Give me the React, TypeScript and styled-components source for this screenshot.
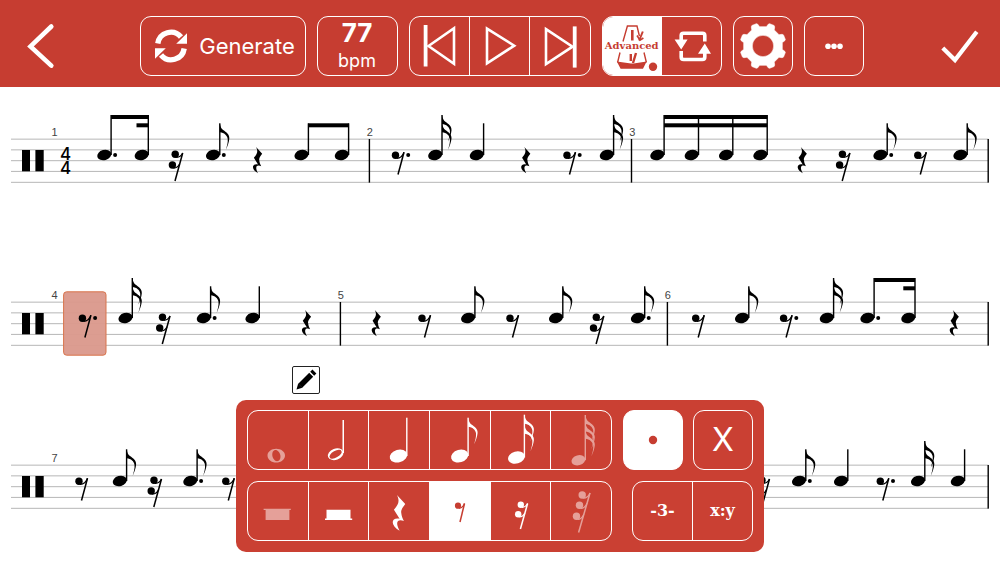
import React from "react";
import styled, { createGlobalStyle, css } from "styled-components";

const RED = "#c63d31";
const PANEL_RED = "#ca4033";
const SANS = `Inter, Roboto, "Liberation Sans", sans-serif`;
const SLAB = `"DejaVu Serif", "Liberation Serif", serif`;

const GlobalStyle = createGlobalStyle`
  *, *::before, *::after { box-sizing: border-box; }
  body { margin: 0; background: #fff; font-family: ${SANS}; }
  button { font: inherit; color: inherit; background: none; border: 0; padding: 0; cursor: pointer; }
`;

const Screen = styled.div`
  position: relative;
  display: flex;
  flex-direction: column;
  height: 100vh;
  overflow: hidden;
`;

/* ---------- top bar ---------- */

const TopBar = styled.header`
  flex: none;
  display: grid;
  grid-template-columns: 1fr auto 1fr;
  align-items: center;
  padding: 16px 16px 11px 16px;
  background: ${RED};
  color: #fff;
`;

const NavButton = styled.button<{ $end?: boolean }>`
  display: flex;
  width: 48px;
  height: 60px;
  align-items: center;
  justify-content: center;
  justify-self: ${(p) => (p.$end ? "end" : "start")};
`;

const Tools = styled.div`
  display: flex;
  gap: 11px;
  margin-left: 3px;
`;

const outlined = css`
  border: 1px solid #fff;
  border-radius: 11px;
`;

const ToolButton = styled.button<{ $width: number; $on?: boolean }>`
  ${outlined}
  display: flex;
  align-items: center;
  justify-content: center;
  width: ${(p) => p.$width}px;
  height: 60px;
  background: ${(p) => (p.$on ? "#fff" : "transparent")};
  color: ${(p) => (p.$on ? RED : "#fff")};
`;

const GenerateButton = styled(ToolButton)`
  gap: 12px;
  padding-left: 5px;
  font-size: 22px;
  line-height: 28px;
`;

const TempoButton = styled(ToolButton)`
  flex-direction: column;
  font-size: 18px;
  line-height: 27px;
  strong {
    font-size: 26px;
    line-height: 28px;
    font-weight: 700;
  }
`;

const Group = styled.div<{ $width: number }>`
  ${outlined}
  display: flex;
  width: ${(p) => p.$width}px;
  height: 60px;
  overflow: hidden;
`;

const Cell = styled.button<{ $on?: boolean; $dim?: boolean }>`
  position: relative;
  flex: 1 1 0;
  display: flex;
  align-items: center;
  justify-content: center;
  background: ${(p) => (p.$on ? "#fff" : "transparent")};
  color: ${(p) => (p.$on ? RED : p.$dim ? "rgba(255, 255, 255, 0.5)" : "#fff")};
  & + & {
    border-left: 1px solid #fff;
  }
`;

const Glyph = styled.svg`
  flex: none;
  display: block;
  overflow: visible;
`;

const AdvancedLabel = styled.span`
  position: absolute;
  inset: 0;
  display: flex;
  align-items: center;
  justify-content: center;
  font: 700 10px/12px ${SLAB};
`;

const SlabText = styled.span`
  font: 700 16px/20px ${SLAB};
`;

const CloseText = styled.span`
  font-size: 32px;
  line-height: 40px;
`;

/* ---------- score ---------- */

const Score = styled.main`
  display: flex;
  flex-direction: column;
  gap: 23px;
`;

const Staff = styled.svg`
  display: block;
  width: 100%;
  height: auto;
  flex: none;
  overflow: visible;
`;

/* ---------- editor ---------- */

const EditorDock = styled.div`
  position: absolute;
  left: 0;
  right: 0;
  bottom: 11px;
  display: flex;
  justify-content: center;
  pointer-events: none;
`;

const Editor = styled.section`
  display: flex;
  flex-direction: column;
  align-items: flex-start;
  gap: 6px;
  pointer-events: auto;
`;

const PencilButton = styled.button`
  display: flex;
  align-items: center;
  justify-content: center;
  width: 28px;
  height: 28px;
  margin-left: 56px;
  border: 1px solid #222;
  border-radius: 2px;
  background: #fff;
  color: #000;
`;

const Palette = styled.div`
  display: flex;
  flex-direction: column;
  gap: 11px;
  width: 528px;
  padding: 10px 11px 11px;
  border-radius: 10px;
  background: ${PANEL_RED};
  color: #fff;
`;

const PaletteRow = styled.div`
  display: flex;
  justify-content: space-between;
`;

/* ---------- drawings ---------- */

type IconProps = { children: React.ReactNode; size?: number };

/* Icons are drawn around a centre at 0,0. */
function Icon({ children, size = 48 }: IconProps) {
  return (
    <Glyph width={size} height={size} viewBox={`${-size / 2} ${-size / 2} ${size} ${size}`} aria-hidden="true">
      {children}
    </Glyph>
  );
}

const FLAG =
  "M0,0 C0.8,4 1.6,5.4 3.4,6.8 C6.4,9 9.8,11 9.5,15.4 C9.2,19.2 7.6,23 6,26.8 C7.2,22.4 8.3,18.8 7.9,15.6 C7.4,12.2 4.5,9.4 0,9Z";
const QUARTER_REST =
  "M-5,-54 L20,-27 C8,-12 7,-6 8,0 C9,10 12,17 16,24 C-2,17 -12,26 3,53 C-25,38 -24,12 3,17 L-14,-10 C0,-26 4,-36 -5,-54Z";

type NoteProps = { x: number; y: number; stem?: number; flags?: number; scale?: number; top: number; flagGap?: number };

function FilledNote({ x, y, stem = 6.8, flags = 0, scale = 1, top, flagGap = 8.2 }: NoteProps) {
  return (
    <g fill="currentColor">
      <ellipse cx={x} cy={y} rx={7.2 * scale} ry={5.1 * scale} transform={`rotate(-16 ${x} ${y})`} />
      <rect x={x + stem - 0.7} y={top} width={1.4} height={y - top} />
      {Array.from({ length: flags }, (_, i) => (
        <path key={i} d={FLAG} transform={`translate(${x + stem} ${top + i * flagGap})`} />
      ))}
    </g>
  );
}

function QuarterRest({ x, y, scale }: { x: number; y: number; scale: number }) {
  return <path d={QUARTER_REST} fill="currentColor" transform={`translate(${x} ${y}) scale(${scale})`} />;
}

type HookRestProps = { blobs: [number, number][]; tip: [number, number]; foot: [number, number]; r: number };

function HookRest({ blobs, tip, foot, r }: HookRestProps) {
  return (
    <g fill="none" stroke="currentColor" strokeWidth={1.2} strokeLinejoin="round">
      <path d={`M${tip} L${foot}`} strokeWidth={1.5} />
      {blobs.map(([bx, by], i) => {
        const t = (by - blobs[0][1]) / (foot[1] - tip[1]);
        const ex = tip[0] + (foot[0] - tip[0]) * t;
        const ey = tip[1] + (foot[1] - tip[1]) * t;
        return (
          <g key={i}>
            <circle cx={bx} cy={by} r={r} fill="currentColor" stroke="none" />
            <path d={`M${bx + 1},${by + r - 0.6} Q${ex - 2.2},${by + r - 0.4} ${ex},${ey}`} />
          </g>
        );
      })}
    </g>
  );
}

type Kind = "head" | "quarter" | "eighth" | "sixteenth" | "r4" | "r8" | "r16";
type Mark = { k: Kind; x: number; dot?: boolean };
type Beam = { stems: number[]; top: number; second?: [number, number] };
type SystemData = {
  marks: Mark[];
  beams: Beam[];
  bars: number[];
  numbers: [number, string][];
  time?: boolean;
  selection?: [number, number];
};

const HEAD_Y = 68;

function ScoreMark({ k, x, dot }: Mark) {
  const restDot = k === "r8" ? 12.7 : 10.8;
  return (
    <g>
      {k === "head" && (
        <ellipse cx={x} cy={HEAD_Y} rx={7.2} ry={5.1} transform={`rotate(-16 ${x} ${HEAD_Y})`} />
      )}
      {k === "quarter" && <FilledNote x={x} y={HEAD_Y} top={36.3} />}
      {k === "eighth" && <FilledNote x={x} y={HEAD_Y} top={36.3} flags={1} />}
      {k === "sixteenth" && <FilledNote x={x} y={HEAD_Y} top={28} flags={2} />}
      {k === "r4" && <QuarterRest x={x} y={73.3} scale={0.244} />}
      {k === "r8" && <HookRest blobs={[[x, 68.2]]} tip={[x + 8.5, 65.2]} foot={[x + 2.5, 87.5]} r={3.7} />}
      {k === "r16" && (
        <HookRest blobs={[[x, 67.2], [x - 2.8, 78]]} tip={[x + 7.5, 66]} foot={[x - 0.2, 94]} r={3.7} />
      )}
      {dot && <circle cx={x + restDot} cy={HEAD_Y} r={2} />}
    </g>
  );
}

function System({ data, label }: { data: SystemData; label: string }) {
  return (
    <Staff viewBox="0 0 1000 140" role="img" aria-label={label} color="#000">
      <g fill="#bdbdbd">
        {[51.6, 62.3, 73.1, 83.9, 94.8].map((y) => (
          <rect key={y} x={11} y={y} width={977.5} height={1.1} />
        ))}
      </g>
      {data.selection && (
        <rect
          x={data.selection[0]}
          y={41.8}
          width={data.selection[1]}
          height={63.4}
          rx={3}
          fill="#db998c"
          fillOpacity={0.96}
          stroke="#d9744c"
        />
      )}
      <rect x={22} y={63} width={8} height={21.3} />
      <rect x={35.4} y={63} width={8.3} height={21.3} />
      {data.time && (
        <g fontFamily="Inter, Liberation Sans, sans-serif" fontSize="17" fontWeight="500" textAnchor="middle">
          <text x="65.5" y="73">4</text>
          <text x="65.5" y="87">4</text>
        </g>
      )}
      <g fontFamily="Liberation Sans, Arial, sans-serif" fontSize="11" fill="#444" textAnchor="middle">
        {data.numbers.map(([x, n]) => (
          <text key={n} x={x} y={49}>{n}</text>
        ))}
      </g>
      {data.bars.map((x) => (
        <rect key={x} x={x - 0.7} y={52} width={1.4} height={43.6} />
      ))}
      {data.marks.map((m) => (
        <ScoreMark key={m.x} {...m} />
      ))}
      {data.beams.map((b) => {
        const first = b.stems[0];
        const last = b.stems[b.stems.length - 1];
        return (
          <g key={first}>
            {b.stems.map((s) => (
              <rect key={s} x={s - 0.7} y={b.top} width={1.4} height={HEAD_Y - b.top} />
            ))}
            <rect x={first} y={b.top} width={last - first} height={4} />
            {b.second && <rect x={b.second[0]} y={b.top + 8.3} width={b.second[1] - b.second[0]} height={4} />}
          </g>
        );
      })}
    </Staff>
  );
}

const systems: SystemData[] = [
  {
    time: true,
    numbers: [[54.5, "1"], [369.7, "2"], [632.2, "3"]],
    bars: [369.4, 631.5, 988.2],
    marks: [
      { k: "head", x: 104.3, dot: true }, { k: "head", x: 141.7 }, { k: "r16", x: 175.2 },
      { k: "eighth", x: 213, dot: true }, { k: "r4", x: 257.3 }, { k: "head", x: 301.5 }, { k: "head", x: 341.8 },
      { k: "r8", x: 395.5, dot: true }, { k: "sixteenth", x: 435.2 }, { k: "quarter", x: 476.8 },
      { k: "r4", x: 525.5 }, { k: "r8", x: 567, dot: true }, { k: "sixteenth", x: 606.8 },
      { k: "head", x: 657.3 }, { k: "head", x: 691.7 }, { k: "head", x: 726 }, { k: "head", x: 760.4 },
      { k: "r4", x: 802 }, { k: "r16", x: 842.4 }, { k: "eighth", x: 880.4, dot: true },
      { k: "r8", x: 917.8 }, { k: "eighth", x: 960.4 },
    ],
    beams: [
      { stems: [111.1, 148.3], top: 28, second: [136.5, 148.3] },
      { stems: [308.4, 348.6], top: 36.3 },
      { stems: [664.1, 698.5, 732.8, 767.2], top: 28, second: [664.1, 767.2] },
    ],
  },
  {
    selection: [63.6, 42.4],
    numbers: [[54.5, "4"], [340.7, "5"], [667.8, "6"]],
    bars: [340.4, 667.4, 988.2],
    marks: [
      { k: "r8", x: 82.4, dot: true }, { k: "sixteenth", x: 125.5 }, { k: "r16", x: 162.5 },
      { k: "eighth", x: 203.8, dot: true }, { k: "quarter", x: 252.5 }, { k: "r4", x: 306.2 },
      { k: "r4", x: 376 }, { k: "r8", x: 422 }, { k: "eighth", x: 468.1 }, { k: "r8", x: 510 },
      { k: "eighth", x: 556 }, { k: "r16", x: 596.3 }, { k: "eighth", x: 637.9, dot: true },
      { k: "r8", x: 695.7 }, { k: "eighth", x: 742 }, { k: "r8", x: 783.6, dot: true },
      { k: "sixteenth", x: 826.8 }, { k: "head", x: 867.4, dot: true }, { k: "head", x: 908.3 },
      { k: "r4", x: 954 },
    ],
    beams: [{ stems: [874.1, 915], top: 28, second: [903.3, 915] }],
  },
  {
    numbers: [[54.5, "7"]],
    bars: [988.2],
    marks: [
      { k: "r8", x: 79 }, { k: "eighth", x: 119.8 }, { k: "r16", x: 154 }, { k: "eighth", x: 190.3, dot: true },
      { k: "r8", x: 225.8 }, { k: "r16", x: 762 }, { k: "eighth", x: 799, dot: true },
      { k: "quarter", x: 841 }, { k: "r8", x: 880.3, dot: true }, { k: "sixteenth", x: 918 },
      { k: "quarter", x: 957.8 },
    ],
    beams: [],
  },
];

function gearPath() {
  const pts: string[] = [];
  const at = (deg: number, r: number) => {
    const a = (deg * Math.PI) / 180;
    pts.push(`${(r * Math.sin(a)).toFixed(2)},${(-r * Math.cos(a)).toFixed(2)}`);
  };
  for (let i = 0; i < 8; i++) {
    const c = 22.5 + i * 45;
    at(c - 12.5, 19.6);
    at(c - 9, 22.4);
    at(c - 6, 23.3);
    at(c + 6, 23.3);
    at(c + 9, 22.4);
    at(c + 12.5, 19.6);
  }
  return `M${pts.join("L")}ZM10.7,0A10.7,10.7 0 1 0 -10.7,0A10.7,10.7 0 1 0 10.7,0Z`;
}

const refreshHalf = (
  <>
    <path d="M-13.2,-2.5 A13.2,13.2 0 0 1 10,-9" fill="none" stroke="currentColor" strokeWidth="5.4" />
    <path d="M16,-12.8 V-2.2 H5.2 L8.6,-5.6 L12.4,-9.2Z" fill="currentColor" />
  </>
);

const noteValues = [
  {
    name: "Whole note",
    dim: true,
    icon: (
      <path
        fillRule="evenodd"
        fill="currentColor"
        d="M-10.5,15.5 C-10.5,11.5 -6.5,8.7 -1.8,8.7 C3,8.7 7,11.5 7,15.5 C7,19.5 3,22.6 -1.8,22.6 C-6.5,22.6 -10.5,19.5 -10.5,15.5Z M-5.6,13 C-6.4,17 -3.8,21 -0.9,21.2 C1.5,21.2 2.8,18.8 2.4,15.6 C2,12.4 -0.2,9.9 -2.6,9.9 C-4.2,9.9 -5.2,11.2 -5.6,13Z"
      />
    ),
  },
  {
    name: "Half note",
    icon: (
      <g fill="currentColor">
        <path
          fillRule="evenodd"
          d="M4.12,11.46 A8,5.6 -20 1 0 -10.92,16.94 A8,5.6 -20 1 0 4.12,11.46Z M2.37,10.9 A6.7,2.9 -30 1 0 -9.17,17.5 A6.7,2.9 -30 1 0 2.37,10.9Z"
        />
        <rect x="3.5" y="-20" width="1.5" height="33" />
      </g>
    ),
  },
  { name: "Quarter note", icon: <FilledNote x={-0.5} y={16} stem={8.3} scale={1.24} top={-22.3} /> },
  { name: "Eighth note", icon: <FilledNote x={-0.3} y={16} stem={8.4} scale={1.22} top={-22.3} flags={1} /> },
  { name: "Sixteenth note", icon: <FilledNote x={-4.6} y={17.5} stem={8} scale={1.18} top={-25.3} flags={2} flagGap={10} /> },
  {
    name: "Thirty-second note",
    dim: true,
    icon: (
      <g opacity="0.5" color="#fff">
        <FilledNote x={-2.6} y={20.2} stem={6.9} scale={0.98} top={-25} flags={3} flagGap={7.4} />
      </g>
    ),
  },
];

const restValues = [
  {
    name: "Whole rest",
    dim: true,
    icon: <path d="M-14.4,-2.3 H12.8 V-1 H11.4 V9 H-12.4 V-1 H-14.4Z" fill="currentColor" />,
  },
  {
    name: "Half rest",
    icon: <path d="M-12.5,-1.3 H11.5 V7.6 H13.2 V9 H-14 V7.6 H-12.5Z" fill="currentColor" />,
  },
  { name: "Quarter rest", icon: <QuarterRest x={-0.4} y={2} scale={0.333} /> },
  {
    name: "Eighth rest",
    on: true,
    icon: <HookRest blobs={[[-2, -5.3]]} tip={[4.5, -7.5]} foot={[0, 11]} r={3.1} />,
  },
  {
    name: "Sixteenth rest",
    icon: <HookRest blobs={[[-0.2, -6.3], [-2.8, 3.3]]} tip={[6.6, -7.5]} foot={[-0.6, 18]} r={3.2} />,
  },
  {
    name: "Thirty-second rest",
    dim: true,
    icon: (
      <g opacity="0.5" color="#fff">
        <HookRest blobs={[[1.2, -16], [-1.5, -5.8], [-4.5, 5.3]]} tip={[9, -18]} foot={[-2.4, 21.5]} r={3.7} />
      </g>
    ),
  },
];

export default function App() {
  return (
    <Screen>
      <GlobalStyle />
      <TopBar>
        <NavButton aria-label="Back">
          <Icon>
            <path d="M11.3,-19.5 L-9.5,0.4 L11.3,19.6" fill="none" stroke="currentColor" strokeWidth="4.6" strokeLinecap="round" />
          </Icon>
        </NavButton>
        <Tools>
          <GenerateButton $width={166}>
            <Icon size={32}>
              {refreshHalf}
              <g transform="rotate(180)">{refreshHalf}</g>
            </Icon>
            <span>Generate</span>
          </GenerateButton>
          <TempoButton $width={81}>
            <strong>77</strong>
            <span>bpm</span>
          </TempoButton>
          <Group $width={182}>
            <Cell aria-label="Previous">
              <Icon>
                <path d="M-10.5,0 L15,-17.8 V17.8Z" fill="none" stroke="currentColor" strokeWidth="2.6" />
                <rect x="-15.3" y="-21" width="3.8" height="41.5" fill="currentColor" />
              </Icon>
            </Cell>
            <Cell aria-label="Play">
              <Icon>
                <path d="M-12,-17.3 L15.2,-0.3 L-12,17.3Z" fill="none" stroke="currentColor" strokeWidth="2.6" />
              </Icon>
            </Cell>
            <Cell aria-label="Next">
              <Icon>
                <path d="M-14,-16.8 L12.5,0.7 L-14,18Z" fill="none" stroke="currentColor" strokeWidth="2.6" />
                <rect x="12.8" y="-19.6" width="3.8" height="41.2" fill="currentColor" />
              </Icon>
            </Cell>
          </Group>
          <Group $width={120}>
            <Cell $on>
              <Icon>
                <g fill="none" stroke="currentColor" strokeWidth="1.4">
                  <path d="M-9,-4.5 L-4.6,-20 H5 L7.4,-10" />
                  <path d="M10.8,-14.5 L7.2,-5.5" strokeWidth="2" />
                  <path d="M5,-10.5 L8,-5.8 L11.4,-8" strokeWidth="1.6" />
                  <path d="M0.3,-16 V-5.5" strokeWidth="2.6" />
                  <path d="M-12,6.5 L-14.4,16.5 M12,6.5 L14.4,16.5" />
                  <path d="M-1.2,8 V15 M4,7 L1,17" strokeWidth="2.4" />
                </g>
                <path d="M-15.2,15.6 L-1,17.4 H1.6 L14.6,15.6 L11,22.8 H-11.4Z" fill="currentColor" />
                <circle cx="21" cy="20.8" r="4.2" fill="currentColor" />
              </Icon>
              <AdvancedLabel>Advanced</AdvancedLabel>
            </Cell>
            <Cell aria-label="Loop">
              <Icon>
                <g transform="translate(1 0)">
                  <g fill="none" stroke="currentColor" strokeWidth="3.6">
                    <path d="M-10.8,-5 V-10.5 Q-10.8,-12.8 -8.5,-12.8 H10.5 Q12.8,-12.8 12.8,-10.5 V-4.5" />
                    <path d="M12.8,6 V11 Q12.8,13.5 10.3,13.5 H-8.3 Q-10.8,13.5 -10.8,11 V5" />
                  </g>
                  <path d="M-17.4,-6.6 H-4.4 L-10.8,3.6Z M6,7.8 H19 L12.8,-2.6Z" fill="currentColor" />
                </g>
              </Icon>
            </Cell>
          </Group>
          <ToolButton $width={60} aria-label="Settings">
            <Icon>
              <path d={gearPath()} fillRule="evenodd" fill="currentColor" stroke="currentColor" strokeWidth="0.6" strokeLinejoin="round" />
            </Icon>
          </ToolButton>
          <ToolButton $width={60} aria-label="More">
            <Icon>
              <g fill="currentColor">
                <circle cx="-6" cy="0.3" r="2.8" />
                <circle cx="0" cy="0.3" r="2.8" />
                <circle cx="6" cy="0.3" r="2.8" />
              </g>
            </Icon>
          </ToolButton>
        </Tools>
        <NavButton $end aria-label="Done">
          <Icon>
            <path d="M-17.2,2 L-5,14 L16.8,-14.2" fill="none" stroke="currentColor" strokeWidth="4.2" />
          </Icon>
        </NavButton>
      </TopBar>

      <Score>
        {systems.map((s, i) => (
          <System key={i} data={s} label={`Staff line ${i + 1}`} />
        ))}
      </Score>

      <EditorDock>
        <Editor>
          <PencilButton aria-label="Edit">
            <Icon size={24}>
              <path d="M-9.5,9.4 L-7.8,3.6 L-3.6,7.8Z" fill="currentColor" />
              <path d="M-5.8,5.8 L5.2,-5.2" stroke="currentColor" strokeWidth="5.6" />
              <path d="M6.2,-6.2 L8.4,-8.4" stroke="currentColor" strokeWidth="5.6" />
            </Icon>
          </PencilButton>
          <Palette>
            <PaletteRow>
              <Group $width={365}>
                {noteValues.map((n) => (
                  <Cell key={n.name} $dim={n.dim} aria-label={n.name}>
                    <Icon>{n.icon}</Icon>
                  </Cell>
                ))}
              </Group>
              <ToolButton $width={60} $on aria-label="Dotted">
                <Icon>
                  <circle r="4.2" fill="currentColor" />
                </Icon>
              </ToolButton>
              <ToolButton $width={60}>
                <CloseText>X</CloseText>
              </ToolButton>
            </PaletteRow>
            <PaletteRow>
              <Group $width={365}>
                {restValues.map((r) => (
                  <Cell key={r.name} $dim={r.dim} $on={r.on} aria-label={r.name}>
                    <Icon>{r.icon}</Icon>
                  </Cell>
                ))}
              </Group>
              <Group $width={121}>
                <Cell>
                  <SlabText>-3-</SlabText>
                </Cell>
                <Cell>
                  <SlabText>x:y</SlabText>
                </Cell>
              </Group>
            </PaletteRow>
          </Palette>
        </Editor>
      </EditorDock>
    </Screen>
  );
}
